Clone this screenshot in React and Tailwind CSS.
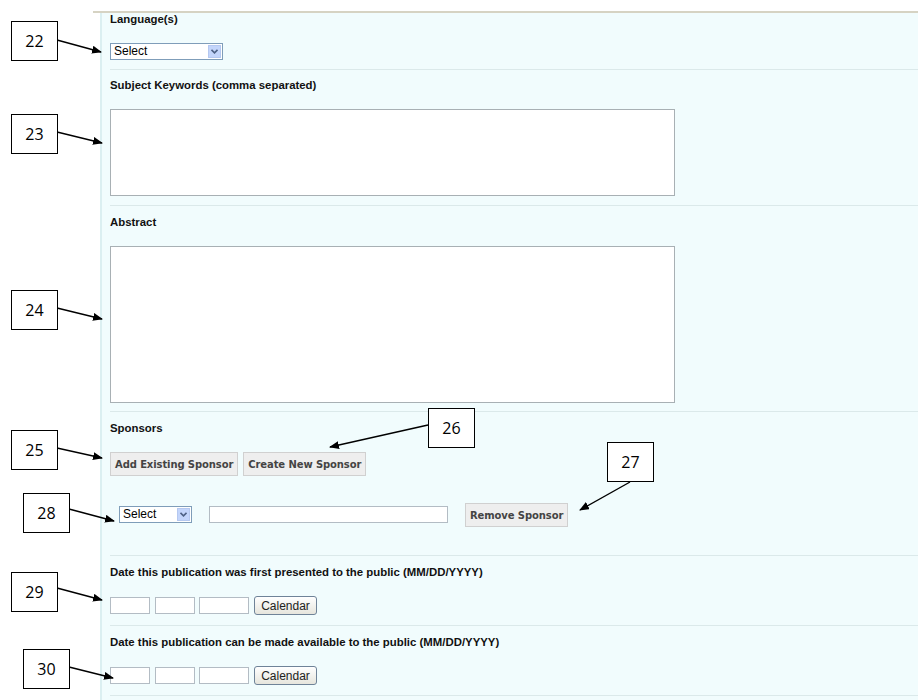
import React from "react";

const callouts = [
  { n: "22", x: 11, y: 21 },
  { n: "23", x: 11, y: 114 },
  { n: "24", x: 11, y: 290 },
  { n: "25", x: 11, y: 430 },
  { n: "26", x: 428, y: 408 },
  { n: "27", x: 607, y: 442 },
  { n: "28", x: 23, y: 493 },
  { n: "29", x: 11, y: 572 },
  { n: "30", x: 23, y: 649 },
];

const arrows = [
  [57, 40, 101, 52],
  [57, 132, 102, 143],
  [57, 308, 102, 319],
  [57, 448, 102, 458],
  [428, 425, 330, 447],
  [630, 482, 580, 510],
  [69, 509, 114, 521],
  [57, 588, 102, 600],
  [69, 667, 113, 678],
];

const Label = ({ children }) => (
  <div className="text-[11.4px] leading-[13px] font-bold text-[#111] font-['Liberation_Sans',Arial,sans-serif]">
    {children}
  </div>
);

const FakeSelect = ({ w }) => (
  <div
    className={`flex h-[17px] items-stretch border border-[#7f9db9] bg-white ${w}`}
  >
    <span className="flex-1 pl-[3px] text-[12px] leading-[15px] text-black">Select</span>
    <span className="m-[1px] flex w-[13px] items-center justify-center border border-[#b5c8f0] bg-[#c3d5fb]">
      <svg width="7" height="5" viewBox="0 0 7 5">
        <path d="M0.5 0.8 L3.5 3.8 L6.5 0.8" fill="none" stroke="#4d6185" strokeWidth="1.6" />
      </svg>
    </span>
  </div>
);

const GrayButton = ({ children }) => (
  <button className="h-[24px] border border-[#d0d0d0] bg-[#eeeeee] px-[4px] text-[10px] font-bold text-[#444] font-['DejaVu_Sans',Verdana,sans-serif] tracking-[-0.1px]">
    {children}
  </button>
);

const DateRow = () => (
  <div className="mt-[17px] flex h-[19px] items-center">
    <div className="h-[17px] w-[40px] border border-[#b3bcc4] bg-white" />
    <div className="ml-[5px] h-[17px] w-[40px] border border-[#b3bcc4] bg-white" />
    <div className="ml-[4px] h-[17px] w-[50px] border border-[#b3bcc4] bg-white" />
    <button className="ml-[5px] h-[19px] w-[63px] rounded-[3px] border border-[#6f8398] bg-gradient-to-b from-white to-[#e6e5dd] text-[12px] leading-[16px] text-[#222]">
      Calendar
    </button>
  </div>
);

export default function App() {
  return (
    <div className="relative h-[700px] w-[924px] overflow-hidden bg-white font-['Liberation_Sans',Arial,sans-serif]">
      <div className="ml-[93px] mt-[11px] h-[2px] w-[825px] bg-[#d6d3c3]" />
      <div className="ml-[100px] h-[687px] w-[818px] border-l-2 border-l-[#dbeff1] bg-[#f1fcfd] pl-[8px]">
        <div className="h-[57px] border-b border-b-[#dbe9ea]">
          <Label>Language(s)</Label>
          <div className="mt-[17px]">
            <FakeSelect w="w-[113px]" />
          </div>
        </div>
        <div className="h-[136px] border-b border-b-[#dbe9ea] pt-[9px]">
          <Label>Subject Keywords (comma separated)</Label>
          <div className="mt-[17px] h-[87px] w-[565px] border border-[#a8b0b4] bg-white" />
        </div>
        <div className="h-[206px] border-b border-b-[#dbe9ea] pt-[10px]">
          <Label>Abstract</Label>
          <div className="mt-[17px] h-[157px] w-[565px] border border-[#a8b0b4] bg-white" />
        </div>
        <div className="h-[144px] border-b border-b-[#dbe9ea] pt-[10px]">
          <Label>Sponsors</Label>
          <div className="mt-[17px] flex gap-[5px]">
            <GrayButton>Add Existing Sponsor</GrayButton>
            <GrayButton>Create New Sponsor</GrayButton>
          </div>
          <div className="mt-[27px] flex h-[23px] items-center pl-[9px]">
            <FakeSelect w="w-[73px]" />
            <div className="ml-[17px] h-[17px] w-[239px] border border-[#b3bcc4] bg-white" />
            <div className="ml-[17px]">
              <GrayButton>Remove Sponsor</GrayButton>
            </div>
          </div>
        </div>
        <div className="h-[70px] border-b border-b-[#dbe9ea] pt-[10px]">
          <Label>Date this publication was first presented to the public (MM/DD/YYYY)</Label>
          <DateRow />
        </div>
        <div className="h-[70px] border-b border-b-[#dbe9ea] pt-[10px]">
          <Label>Date this publication can be made available to the public (MM/DD/YYYY)</Label>
          <DateRow />
        </div>
      </div>

      <svg className="pointer-events-none absolute left-0 top-0" width="924" height="700">
        <defs>
          <marker id="head" markerWidth="10" markerHeight="8" refX="9" refY="4" orient="auto" markerUnits="userSpaceOnUse">
            <path d="M0 0 L10 4 L0 8 Z" fill="#000" />
          </marker>
        </defs>
        {arrows.map(([x1, y1, x2, y2], i) => (
          <line key={i} x1={x1} y1={y1} x2={x2} y2={y2} stroke="#000" strokeWidth="1.4" markerEnd="url(#head)" />
        ))}
      </svg>

      {callouts.map((c) => (
        <div
          key={c.n}
          className="absolute flex h-[40px] w-[47px] items-center justify-center border-[1.5px] border-black bg-white text-[16px] text-black font-['Open_Sans',sans-serif]"
          style={{ left: c.x, top: c.y }}
        >
          {c.n}
        </div>
      ))}
    </div>
  );
}
